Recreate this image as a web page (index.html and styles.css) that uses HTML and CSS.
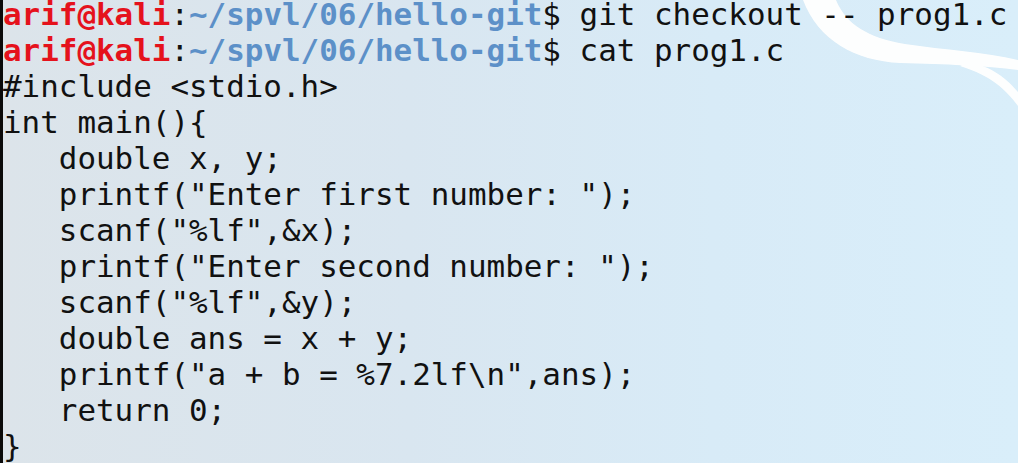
FILE: index.html
```html
<!DOCTYPE html>
<html lang="en">
<head>
<meta charset="utf-8">
<title>Terminal</title>
<link rel="stylesheet" href="styles.css">
</head>
<body>
<div class="terminal">
  <svg class="swoosh" viewBox="0 0 1018 463" width="1018" height="463" aria-hidden="true">
    <path d="M803,0 L836,0 C846,24 868,38 905,44 C945,50 985,52 1018,60 L1018,70 C985,66 945,64 900,63 C855,61 818,40 803,0 Z"/>
    <path d="M968,62 C992,66 1008,80 1018,92 L1018,106 C1006,90 992,76 960,66 Z"/>
  </svg>
  <pre class="screen"><span class="user">arif@kali</span>:<span class="path">~/spvl/06/hello-git</span>$ git checkout -- prog1.c
<span class="user">arif@kali</span>:<span class="path">~/spvl/06/hello-git</span>$ cat prog1.c
#include &lt;stdio.h&gt;
int main(){
   double x, y;
   printf("Enter first number: ");
   scanf("%lf",&amp;x);
   printf("Enter second number: ");
   scanf("%lf",&amp;y);
   double ans = x + y;
   printf("a + b = %7.2lf\n",ans);
   return 0;
}</pre>
</div>
</body>
</html>
```
FILE: styles.css
```css
html, body {
  margin: 0;
  padding: 0;
  width: 1018px;
  height: 463px;
  overflow: hidden;
}

.terminal {
  position: relative;
  width: 1018px;
  height: 463px;
  box-sizing: border-box;
  border-left: 3px solid #0a0a0a;
  background: linear-gradient(90deg, #dce4ea 0%, #d9e6f0 40%, #d8ebf7 70%, #d9eefa 100%);
  overflow: hidden;
}

.swoosh {
  position: absolute;
  left: -3px;
  top: 0;
  fill: #ffffff;
  opacity: 0.95;
}

.screen {
  position: relative;
  margin: -4px 0 0 0;
  font-family: "DejaVu Sans Mono", monospace;
  font-size: 30.9px;
  line-height: 36px;
  color: #111111;
  white-space: pre;
}

.user {
  color: #e5121c;
  font-weight: bold;
}

.path {
  color: #5c90c8;
  font-weight: bold;
}
```
